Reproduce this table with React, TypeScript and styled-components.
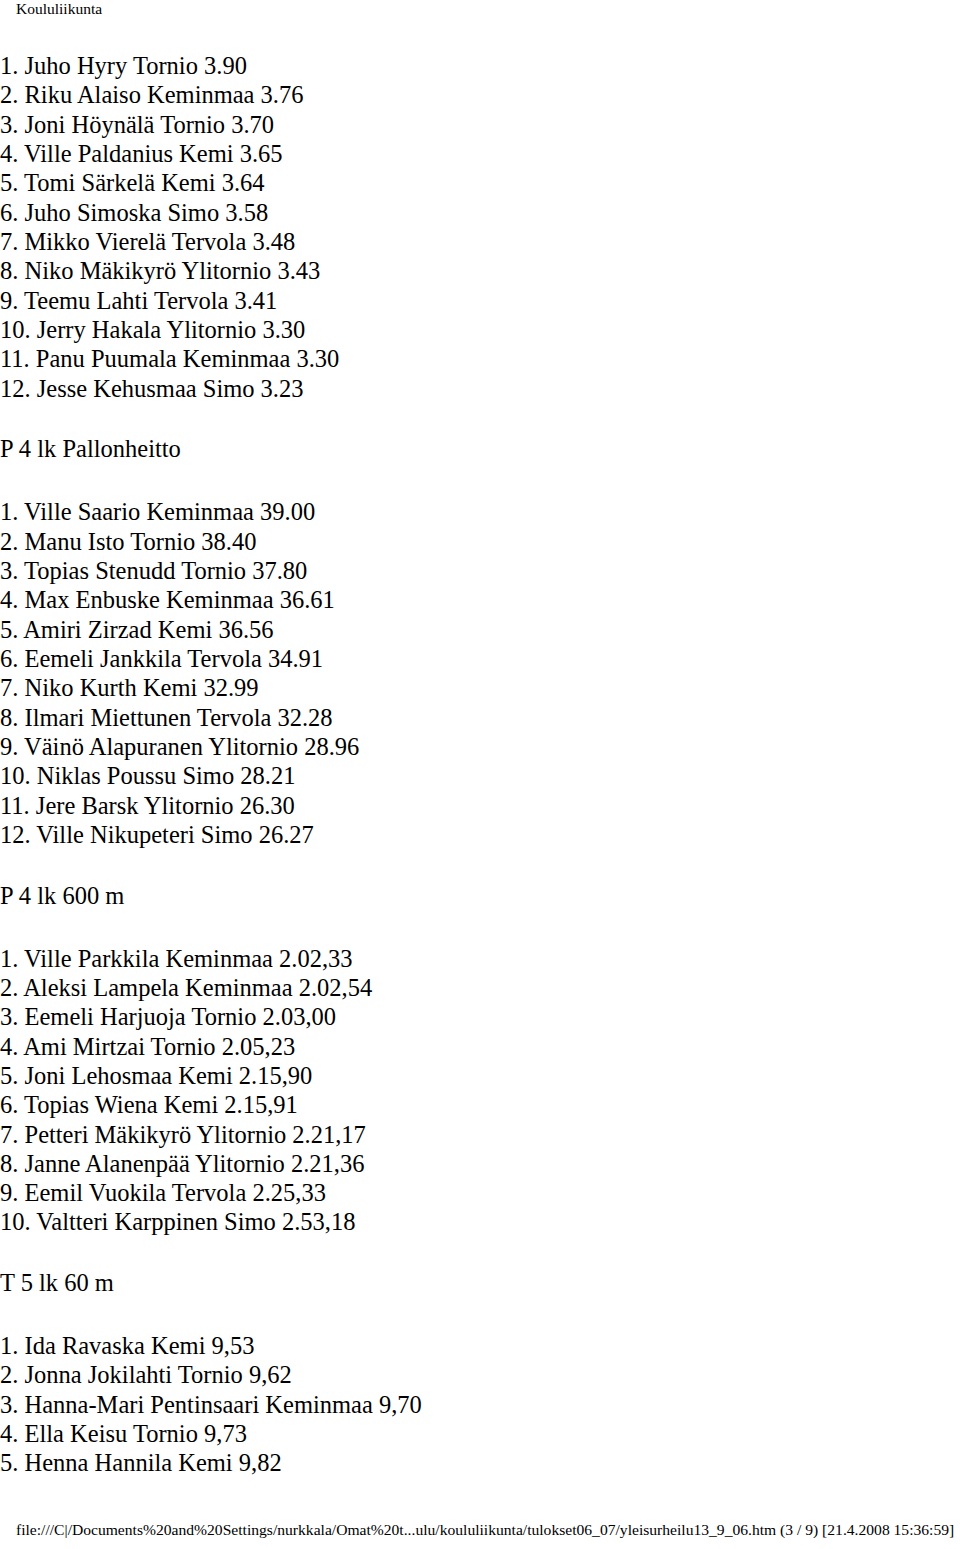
import React from "react";
import styled, { createGlobalStyle } from "styled-components";

const Global = createGlobalStyle`
  html, body { margin: 0; padding: 0; background: #fff; }
  body { font-family: "Liberation Serif", "Times New Roman", serif; color: #000; }
`;

const Page = styled.div`
  width: 960px;
  display: flex;
  flex-direction: column;
`;

const Header = styled.div`
  padding: 0 16px;
  font-size: 15.5px;
  line-height: 17px;
`;

const Content = styled.main`
  display: flex;
  flex-direction: column;
  margin-top: 34px;
  gap: 31.5px;
`;

const Section = styled.section`
  display: flex;
  flex-direction: column;
  gap: 33.5px;
`;

const Heading = styled.div`
  font-size: 24.5px;
  line-height: 29.33px;
`;

const List = styled.div`
  display: flex;
  flex-direction: column;
`;

const Row = styled.div`
  font-size: 24.5px;
  line-height: 29.33px;
  white-space: nowrap;
`;

const Footer = styled.div`
  margin-top: 43px;
  padding: 0 16px;
  font-size: 15.6px;
  line-height: 17px;
  white-space: nowrap;
`;

type Block = { title?: string; rows: string[] };

const blocks: Block[] = [
  {
    rows: [
      "1. Juho Hyry Tornio 3.90",
      "2. Riku Alaiso Keminmaa 3.76",
      "3. Joni Höynälä Tornio 3.70",
      "4. Ville Paldanius Kemi 3.65",
      "5. Tomi Särkelä Kemi 3.64",
      "6. Juho Simoska Simo 3.58",
      "7. Mikko Vierelä Tervola 3.48",
      "8. Niko Mäkikyrö Ylitornio 3.43",
      "9. Teemu Lahti Tervola 3.41",
      "10. Jerry Hakala Ylitornio 3.30",
      "11. Panu Puumala Keminmaa 3.30",
      "12. Jesse Kehusmaa Simo 3.23",
    ],
  },
  {
    title: "P 4 lk Pallonheitto",
    rows: [
      "1. Ville Saario Keminmaa 39.00",
      "2. Manu Isto Tornio 38.40",
      "3. Topias Stenudd Tornio 37.80",
      "4. Max Enbuske Keminmaa 36.61",
      "5. Amiri Zirzad Kemi 36.56",
      "6. Eemeli Jankkila Tervola 34.91",
      "7. Niko Kurth Kemi 32.99",
      "8. Ilmari Miettunen Tervola 32.28",
      "9. Väinö Alapuranen Ylitornio 28.96",
      "10. Niklas Poussu Simo 28.21",
      "11. Jere Barsk Ylitornio 26.30",
      "12. Ville Nikupeteri Simo 26.27",
    ],
  },
  {
    title: "P 4 lk 600 m",
    rows: [
      "1. Ville Parkkila Keminmaa 2.02,33",
      "2. Aleksi Lampela Keminmaa 2.02,54",
      "3. Eemeli Harjuoja Tornio 2.03,00",
      "4. Ami Mirtzai Tornio 2.05,23",
      "5. Joni Lehosmaa Kemi 2.15,90",
      "6. Topias Wiena Kemi 2.15,91",
      "7. Petteri Mäkikyrö Ylitornio 2.21,17",
      "8. Janne Alanenpää Ylitornio 2.21,36",
      "9. Eemil Vuokila Tervola 2.25,33",
      "10. Valtteri Karppinen Simo 2.53,18",
    ],
  },
  {
    title: "T 5 lk 60 m",
    rows: [
      "1. Ida Ravaska Kemi 9,53",
      "2. Jonna Jokilahti Tornio 9,62",
      "3. Hanna-Mari Pentinsaari Keminmaa 9,70",
      "4. Ella Keisu Tornio 9,73",
      "5. Henna Hannila Kemi 9,82",
    ],
  },
];

export default function App() {
  return (
    <Page>
      <Global />
      <Header>Koululiikunta</Header>
      <Content>
        {blocks.map((b, i) => (
          <Section key={i}>
            {b.title && <Heading>{b.title}</Heading>}
            <List>
              {b.rows.map((r) => (
                <Row key={r}>{r}</Row>
              ))}
            </List>
          </Section>
        ))}
      </Content>
      <Footer>
        file:///C|/Documents%20and%20Settings/nurkkala/Omat%20t...ulu/koululiikunta/tulokset06_07/yleisurheilu13_9_06.htm (3 / 9) [21.4.2008 15:36:59]
      </Footer>
    </Page>
  );
}
